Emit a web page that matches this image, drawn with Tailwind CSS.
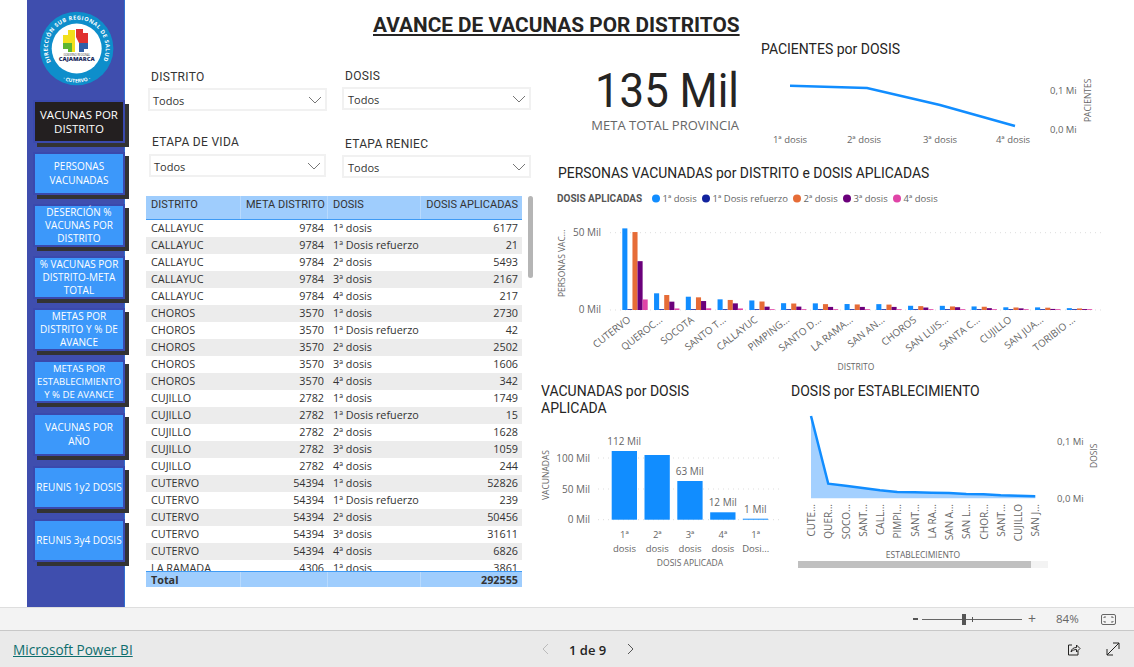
<!DOCTYPE html>
<html lang="es">
<head>
    <meta charset="UTF-8">
    <meta name="viewport" content="width=device-width, initial-scale=1.0">
    <title>Avance de vacunas por distritos</title>
    <script src="https://cdn.jsdelivr.net/npm/@tailwindcss/browser@4"></script>
</head>
<body class="bg-white overflow-hidden">
<div class="w-[1134px] h-[667px] flex flex-col overflow-hidden font-['Open_Sans',sans-serif] text-[#333]">

    <!-- report canvas -->
    <div class="h-[607px] flex">

        <!-- sidebar -->
        <aside class="ml-[27px] w-[98px] h-[607px] bg-[#3f4eae] border-r border-[#2f6fd0] shrink-0">
            <svg class="block mt-[11px] ml-[12px]" width="76" height="76" viewBox="39 11 76 76">
                <defs>
                    <path id="arcTop" d="M 51 62 A 29 29 0 1 1 102.400 62"></path>
                    <path id="arcBottom" d="M 54.700 74.500 A 34 34 0 0 0 98.700 74.500"></path>
                </defs>
                <circle cx="76.7" cy="48.5" r="36.7" fill="#0e8ecb"></circle>
                <circle cx="76.7" cy="48.5" r="25" fill="#fff"></circle>
                <text font-size="5.600" font-weight="700" fill="#fff" font-family="Open Sans"><textPath href="#arcTop" textLength="117">DIRECCIÓN SUB REGIONAL DE SALUD</textPath></text>
                <text font-size="5" font-weight="700" fill="#fff" font-family="Open Sans" text-anchor="middle"><textPath href="#arcBottom" startOffset="50%">· CUTERVO ·</textPath></text>
                <path d="M63 35h5v-5h7v22h-7v-4h-5z" fill="#f2e01c"></path>
                <path d="M63 43h9v9h-4v-3h-5z" fill="#5cb531"></path>
                <path d="M76 29h7v4h5v10h-9l-3-6z" fill="#e0312f"></path>
                <path d="M79 43h9v6h-4v3h-5z" fill="#2f5fa8"></path>
                <text x="76.7" y="55.500" text-anchor="middle" font-size="2.600" fill="#444" font-family="Open Sans">GOBIERNO REGIONAL</text>
                <text x="76.7" y="61" text-anchor="middle" font-size="5.800" font-weight="800" fill="#1d2a5c" font-family="Open Sans">CAJAMARCA</text>
            </svg>
            <nav class="mt-[13px] flex flex-col gap-[9px] text-white text-center text-[10px] leading-[13.300px]">
                <a class="ml-[6px] w-[92px] h-[43px] flex items-center justify-center bg-[#231f20] border-2 border-[#3a49ad] shadow-[4px_4px_0_#333] text-[11.5px] leading-[14px]">VACUNAS POR<br>DISTRITO</a>
                <a class="ml-[6px] w-[92px] h-[43px] flex items-center justify-center bg-[#3c98fa] border-2 border-[#3a49ad] shadow-[4px_4px_0_#333]">PERSONAS<br>VACUNADAS</a>
                <a class="ml-[6px] w-[92px] h-[43px] flex items-center justify-center bg-[#3c98fa] border-2 border-[#3a49ad] shadow-[4px_4px_0_#333]">DESERCIÓN %<br>VACUNAS POR<br>DISTRITO</a>
                <a class="ml-[6px] w-[92px] h-[43px] flex items-center justify-center bg-[#3c98fa] border-2 border-[#3a49ad] shadow-[4px_4px_0_#333]">% VACUNAS POR<br>DISTRITO-META<br>TOTAL</a>
                <a class="ml-[6px] w-[92px] h-[43px] flex items-center justify-center bg-[#3c98fa] border-2 border-[#3a49ad] shadow-[4px_4px_0_#333]">METAS POR<br>DISTRITO Y % DE<br>AVANCE</a>
                <a class="ml-[6px] w-[92px] h-[43px] flex items-center justify-center bg-[#3c98fa] border-2 border-[#3a49ad] shadow-[4px_4px_0_#333] text-[9.600px]">METAS POR<br>ESTABLECIMIENTO<br>Y % DE AVANCE</a>
                <a class="mt-px ml-[6px] w-[92px] h-[43px] flex items-center justify-center bg-[#3c98fa] border-2 border-[#3a49ad] shadow-[4px_4px_0_#333]">VACUNAS POR<br>AÑO</a>
                <a class="mt-px ml-[6px] w-[92px] h-[43px] flex items-center justify-center bg-[#3c98fa] border-2 border-[#3a49ad] shadow-[4px_4px_0_#333]">REUNIS 1y2 DOSIS</a>
                <a class="mt-px ml-[6px] w-[92px] h-[43px] flex items-center justify-center bg-[#3c98fa] border-2 border-[#3a49ad] shadow-[4px_4px_0_#333]">REUNIS 3y4 DOSIS</a>
            </nav>
        </aside>

        <!-- filters and table -->
        <section class="ml-[21px] w-[394px] shrink-0 relative">
            <h1 class="absolute left-[227px] top-[13px] w-[366px] whitespace-nowrap text-center text-[20.800px] leading-[24px] font-bold text-[#252423] underline font-['Roboto',sans-serif]">AVANCE DE VACUNAS POR DISTRITOS</h1>

            <div class="pt-[68px] h-[196px] font-['Roboto',sans-serif]">
                <div class="flex">
                    <div class="ml-[2px] mt-[1px] w-[179px]">
                        <p class="ml-[3px] text-[12px] leading-[16px] tracking-[.3px] text-[#333]">DISTRITO</p>
                        <div class="mt-[3px] h-[23px] border-2 border-[#f1f1f1] flex items-center justify-between pl-[3px] pr-[3px] text-[11px] font-['Open_Sans',sans-serif]"><span class="pt-[3px]">Todos</span>
                            <svg width="14" height="8" viewBox="0 0 14 8"><path d="M1 1l6 6 6-6" fill="none" stroke="#777"></path></svg>
                        </div>
                    </div>
                    <div class="ml-[15px] w-[189px]">
                        <p class="ml-[3px] text-[12px] leading-[16px] tracking-[.3px] text-[#333]">DOSIS</p>
                        <div class="mt-[3px] h-[23px] border-2 border-[#f1f1f1] flex items-center justify-between pl-[4px] pr-[3px] text-[11px] font-['Open_Sans',sans-serif]"><span class="pt-[3px]">Todos</span>
                            <svg width="14" height="8" viewBox="0 0 14 8"><path d="M1 1l6 6 6-6" fill="none" stroke="#777"></path></svg>
                        </div>
                    </div>
                </div>
                <div class="flex mt-[24px]">
                    <div class="-mt-px ml-[3px] w-[177px]">
                        <p class="ml-[3px] text-[12px] leading-[16px] tracking-[.3px] text-[#333]">ETAPA DE VIDA</p>
                        <div class="mt-[4px] h-[23px] border-2 border-[#f1f1f1] flex items-center justify-between pl-[3px] pr-[3px] text-[11px] font-['Open_Sans',sans-serif]"><span class="pt-[3px]">Todos</span>
                            <svg width="14" height="8" viewBox="0 0 14 8"><path d="M1 1l6 6 6-6" fill="none" stroke="#777"></path></svg>
                        </div>
                    </div>
                    <div class="ml-[16px] mt-px w-[189px]">
                        <p class="ml-[3px] text-[12px] leading-[16px] tracking-[.3px] text-[#333]">ETAPA RENIEC</p>
                        <div class="mt-[3px] h-[23px] border-2 border-[#f1f1f1] flex items-center justify-between pl-[4px] pr-[3px] text-[11px] font-['Open_Sans',sans-serif]"><span class="pt-[3px]">Todos</span>
                            <svg width="14" height="8" viewBox="0 0 14 8"><path d="M1 1l6 6 6-6" fill="none" stroke="#777"></path></svg>
                        </div>
                    </div>
                </div>
            </div>

            <div class="flex">
                <div class="w-[376px] text-[10.800px] leading-[16px]">
                    <div class="grid grid-cols-[95px_87px_93px_101px] h-[24px] bg-[#9fcdfd] border-b border-[#3f9bf5] leading-[18px] font-['Roboto',sans-serif] text-[11px] whitespace-nowrap">
                        <div class="pl-[5px] border-r border-[#b8dafd]">DISTRITO</div>
                        <div class="pl-[5px] border-r border-[#b8dafd]">META DISTRITO</div>
                        <div class="pl-[5px] border-r border-[#b8dafd]">DOSIS</div>
                        <div class="pr-[4px] text-right">DOSIS APLICADAS</div>
                    </div>
                    <div id="rows" class="h-[351px] overflow-hidden"></div>
                    <div class="grid grid-cols-[95px_87px_93px_101px] h-[16px] bg-[#9fcdfd] border-t border-[#3f9bf5] leading-[15px] font-bold">
                        <div class="pl-[5px] border-r border-[#b8dafd]">Total</div>
                        <div class="border-r border-[#b8dafd]"></div>
                        <div class="border-r border-[#b8dafd]"></div>
                        <div class="pr-[4px] text-right">292555</div>
                    </div>
                </div>
                <div class="ml-[6px] w-[5px] h-[82px] rounded-full bg-[#b5b5b5]"></div>
            </div>
        </section>

        <!-- charts -->
        <section class="w-[594px] shrink-0 font-['Roboto',sans-serif]">
            <svg id="topChart" class="block mt-[38px]" width="594" height="122" viewBox="540 38 594 122"></svg>
            <svg id="barChart" class="block" width="594" height="219" viewBox="540 160 594 219"></svg>
            <div class="flex">
                <svg id="doseChart" class="block shrink-0" width="245" height="195" viewBox="540 379 245 195"></svg>
                <svg id="estabChart" class="block shrink-0" width="349" height="195" viewBox="785 379 349 195"></svg>
            </div>
        </section>
    </div>

    <!-- zoom bar -->
    <div class="h-[24px] bg-[#f3f3f3] border-t border-b border-t-[#dedede] border-b-[#c8c8c8] flex items-center justify-end text-[#666]">
        <span class="w-[5px] h-[2px] bg-[#555]"></span>
        <div class="relative ml-[4px] w-[100px] h-px bg-[#666]">
            <span class="absolute left-[40px] -top-[5px] w-[4px] h-[11px] bg-[#555]"></span>
            <span class="absolute left-[50px] -top-[2px] w-px h-[5px] bg-[#555]"></span>
        </div>
        <span class="ml-[6px] text-[14px] leading-[14px]">+</span>
        <span class="ml-[20px] w-[23px] text-[11.5px]">84%</span>
        <svg class="ml-[22px] mr-[18px]" width="15" height="11" viewBox="0 0 15 11"><rect x=".5" y=".5" width="14" height="10" rx="1.5" fill="none" stroke="#666"></rect><path d="M3 4V3h2M10 3h2v1M3 7v1h2M10 8h2V7" fill="none" stroke="#666"></path></svg>
    </div>

    <!-- footer -->
    <footer class="relative h-[36px] bg-[#eaeaea] flex items-center justify-between">
        <a class="ml-[13px] pt-[2px] text-[13.600px] text-[#0e6e6e] underline">Microsoft Power BI</a>
        <div class="absolute left-[541px] top-0 h-[36px] flex items-center">
            <svg width="10" height="12" viewBox="0 0 10 12"><path d="M7 1L2 6l5 5" fill="none" stroke="#bbb"></path></svg>
            <span class="ml-[18px] pt-[3px] text-[13px] font-semibold text-[#252423]">1 de 9</span>
            <svg class="ml-[19px]" width="10" height="12" viewBox="0 0 10 12"><path d="M3 1l5 5-5 5" fill="none" stroke="#555"></path></svg>
        </div>
        <div class="flex items-center mr-[14px]">
            <svg width="14" height="13" viewBox="0 0 14 13"><path d="M5 2H1.5v10h9.500V8" fill="none" stroke="#252423"></path><path d="M4 9c.3-3 2.500-4.500 5.500-4.500V2L13 5.500 9.500 9V6.500C7.500 6.500 5.500 7.300 4 9z" fill="none" stroke="#252423"></path></svg>
            <svg class="ml-[25px]" width="14" height="14" viewBox="0 0 14 14"><path d="M1 13L13 1M7 1h6v6M1 7v6h6" fill="none" stroke="#252423"></path></svg>
        </div>
    </footer>
</div>

<script>
  const districts = [
    ["CALLAYUC", 9784, [6177, 21, 5493, 2167, 217]],
    ["CHOROS", 3570, [2730, 42, 2502, 1606, 342]],
    ["CUJILLO", 2782, [1749, 15, 1628, 1059, 244]],
    ["CUTERVO", 54394, [52826, 239, 50456, 31611, 6826]],
    ["LA RAMADA", 4306, [3861]],
  ];
  const doses = ["1ª dosis", "1ª Dosis refuerzo", "2ª dosis", "3ª dosis", "4ª dosis"];
  const colors = ["#118dff", "#12239e", "#e66c37", "#6b007b", "#e044a7"];
  const axisFont = 'font-family="Open Sans" fill="#666"';
  const titleFont = 'font-family="Roboto" fill="#252423"';

  // table
  let rowsHtml = "";
  let rowIndex = 0;
  districts.forEach(([name, meta, values]) => {
    values.forEach((value, i) => {
      const bg = rowIndex % 2 ? "bg-[#ececec]" : "bg-white";
      rowsHtml += `<div class="grid grid-cols-[95px_87px_93px_101px] h-[17px] ${bg}">
        <div class="pl-[5px]">${name}</div><div class="pr-[4px] text-right">${meta}</div>
        <div class="pl-[5px]">${doses[i]}</div><div class="pr-[4px] text-right">${value}</div></div>`;
      rowIndex++;
    });
  });
  document.getElementById("rows").innerHTML = rowsHtml;

  // KPI and line chart
  document.getElementById("topChart").innerHTML = `
    <text x="739" y="107" text-anchor="end" font-size="49" textLength="144" lengthAdjust="spacingAndGlyphs" font-family="Roboto" fill="#252423">135 Mil</text>
    <text x="739" y="130" text-anchor="end" font-size="13" font-family="Open Sans" fill="#666">META TOTAL PROVINCIA</text>
    <text x="761" y="54" font-size="14" ${titleFont}>PACIENTES por DOSIS</text>
    <polyline points="790,85.700 867,88 940,105 1015,126" fill="none" stroke="#118dff" stroke-width="2.500"></polyline>
    ${["1ª dosis|790", "2ª dosis|864", "3ª dosis|940", "4ª dosis|1013"].map(s => `<text x="${s.split("|")[1]}" y="143" text-anchor="middle" font-size="9.500" ${axisFont}>${s.split("|")[0]}</text>`).join("")}
    <text x="1050" y="94" font-size="9.500" ${axisFont}>0,1 Mi</text>
    <text x="1050" y="133" font-size="9.500" ${axisFont}>0,0 Mi</text>
    <text transform="translate(1091,122) rotate(-90)" font-size="8.500" ${axisFont}>PACIENTES</text>`;

  // clustered bars
  const barGroups = [
    ["CUTERVO", [52826, 239, 50456, 31611, 6826]],
    ["QUEROC...", [10800, 300, 9700, 5400, 1000]],
    ["SOCOTA", [8600, 200, 8200, 5800, 1100]],
    ["SANTO T...", [6900, 100, 6500, 4300, 1000]],
    ["CALLAYUC", [6177, 21, 5493, 2167, 400]],
    ["PIMPING...", [4400, 40, 4200, 2200, 300]],
    ["SANTO D...", [4300, 40, 3800, 2000, 300]],
    ["LA RAMA...", [3861, 40, 3600, 2000, 300]],
    ["SAN AN...", [3800, 40, 3500, 2000, 300]],
    ["CHOROS", [2730, 42, 2502, 1606, 342]],
    ["SAN LUIS...", [2700, 40, 2300, 1800, 300]],
    ["SANTA C...", [2300, 30, 2100, 1200, 200]],
    ["CUJILLO", [1749, 15, 1628, 1059, 244]],
    ["SAN JUA...", [1700, 20, 1500, 700, 300]],
    ["TORIBIO ...", [1200, 0, 1000, 600, 300]],
  ];
  const baseY = 310;
  let bars = "";
  barGroups.forEach(([label, values], g) => {
    const gx = 622.3 + g * 31.75;
    values.forEach((v, i) => {
      const h = Math.max(v * 0.001545, 0.8);
      bars += `<rect x="${gx + i * 5.08}" y="${baseY - h}" width="5.08" height="${h}" fill="${colors[i]}"></rect>`;
    });
    bars += `<text transform="translate(${gx + 9},321) rotate(-38)" text-anchor="end" font-size="10" ${axisFont}>${label}</text>`;
  });
  const legendXs = [651, 701, 792, 842, 892];
  document.getElementById("barChart").innerHTML = `
    <text x="558" y="178" font-size="13.900" ${titleFont}>PERSONAS VACUNADAS por DISTRITO e DOSIS APLICADAS</text>
    <text x="557" y="202" font-size="10" font-weight="700" font-family="Roboto" fill="#555">DOSIS APLICADAS</text>
    ${doses.map((d, i) => `<circle cx="${legendXs[i] + 5}" cy="198.500" r="4" fill="${colors[i]}"></circle><text x="${legendXs[i] + 11.500}" y="202" font-size="9.500" ${axisFont}>${d}</text>`).join("")}
    <line x1="610" x2="1105" y1="232.700" y2="232.700" stroke="#ddd" stroke-dasharray="1 4"></line>
    <line x1="610" x2="1105" y1="310" y2="310" stroke="#ddd" stroke-dasharray="1 4"></line>
    <text x="601" y="236" text-anchor="end" font-size="10" ${axisFont}>50 Mil</text>
    <text x="601" y="313" text-anchor="end" font-size="10" ${axisFont}>0 Mil</text>
    <text transform="translate(565,297) rotate(-90)" font-size="8.500" ${axisFont}>PERSONAS VAC...</text>
    ${bars}
    <text x="856" y="370" text-anchor="middle" font-size="8.500" ${axisFont}>DISTRITO</text>`;

  // vaccinated by dose
  const doseBars = [[611.7, 451, "112 Mil"], [644.500, 455, ""], [677.300, 481, "63 Mil"], [710.200, 512.300, "12 Mil"], [742.800, 518.700, "1 Mil"]];
  document.getElementById("doseChart").innerHTML = `
    <text x="541" y="396" font-size="14" ${titleFont}>VACUNADAS por DOSIS</text>
    <text x="541" y="413" font-size="14" ${titleFont}>APLICADA</text>
    <line x1="598" x2="782" y1="458" y2="458" stroke="#ddd" stroke-dasharray="1 4"></line>
    <line x1="598" x2="782" y1="489" y2="489" stroke="#ddd" stroke-dasharray="1 4"></line>
    <line x1="598" x2="782" y1="519.700" y2="519.700" stroke="#ddd" stroke-dasharray="1 4"></line>
    ${["100 Mil|462", "50 Mil|493", "0 Mil|523"].map(s => `<text x="590" y="${s.split("|")[1]}" text-anchor="end" font-size="10" ${axisFont}>${s.split("|")[0]}</text>`).join("")}
    <text transform="translate(549,500) rotate(-90)" font-size="8.500" ${axisFont}>VACUNADAS</text>
    ${doseBars.map(([x, y, t]) => `<rect x="${x}" y="${y}" width="25.300" height="${519.700 - y}" fill="#118dff"></rect>${t ? `<text x="${x + 12.500}" y="${y - 6}" text-anchor="middle" font-size="10" ${axisFont}>${t}</text>` : ""}`).join("")}
    ${["1ª", "2ª", "3ª", "4ª", "1ª"].map((t, i) => `<text x="${624.500 + i * 32.800}" y="538" text-anchor="middle" font-size="9.500" ${axisFont}>${t}</text>`).join("")}
    ${["dosis", "dosis", "dosis", "dosis", "Dosi..."].map((t, i) => `<text x="${624.500 + i * 32.800}" y="552" text-anchor="middle" font-size="9.500" ${axisFont}>${t}</text>`).join("")}
    <text x="690" y="566" text-anchor="middle" font-size="8.500" ${axisFont}>DOSIS APLICADA</text>`;

  // doses by facility
  const estabY = [416, 483.7, 485.7, 488, 490.3, 492, 492.300, 492.700, 493, 494, 494.300, 495.300, 495.700, 496.300];
  const estabLabels = ["CUTE...", "QUER...", "SOCO...", "SANT...", "CALL...", "PIMPI...", "SANT...", "LA RA...", "SAN A...", "SAN L...", "CHOR...", "SANT...", "CUJILLO", "SAN J..."];
  const estabPts = estabY.map((y, i) => `${811 + i * 17.250},${y}`).join(" ");
  document.getElementById("estabChart").innerHTML = `
    <text x="791" y="396" font-size="14" ${titleFont}>DOSIS por ESTABLECIMIENTO</text>
    <polygon points="811,498.300 ${estabPts} 1035.300,498.300" fill="#a3d0ff"></polygon>
    <polyline points="${estabPts}" fill="none" stroke="#118dff" stroke-width="2.500"></polyline>
    ${estabLabels.map((t, i) => `<text transform="translate(${815 + i * 17.250},504) rotate(-90)" text-anchor="end" font-size="10" ${axisFont}>${t}</text>`).join("")}
    <text x="1057" y="445" font-size="9.500" ${axisFont}>0,1 Mi</text>
    <text x="1057" y="502" font-size="9.500" ${axisFont}>0,0 Mi</text>
    <text transform="translate(1097,468) rotate(-90)" font-size="8.500" ${axisFont}>DOSIS</text>
    <text x="923" y="558" text-anchor="middle" font-size="8.500" ${axisFont}>ESTABLECIMIENTO</text>
    <rect x="798" y="561" width="250" height="7" fill="#f3f3f3"></rect>
    <rect x="798" y="561" width="233" height="7" fill="#c0c0c0"></rect>`;
</script>
</body>
</html>
